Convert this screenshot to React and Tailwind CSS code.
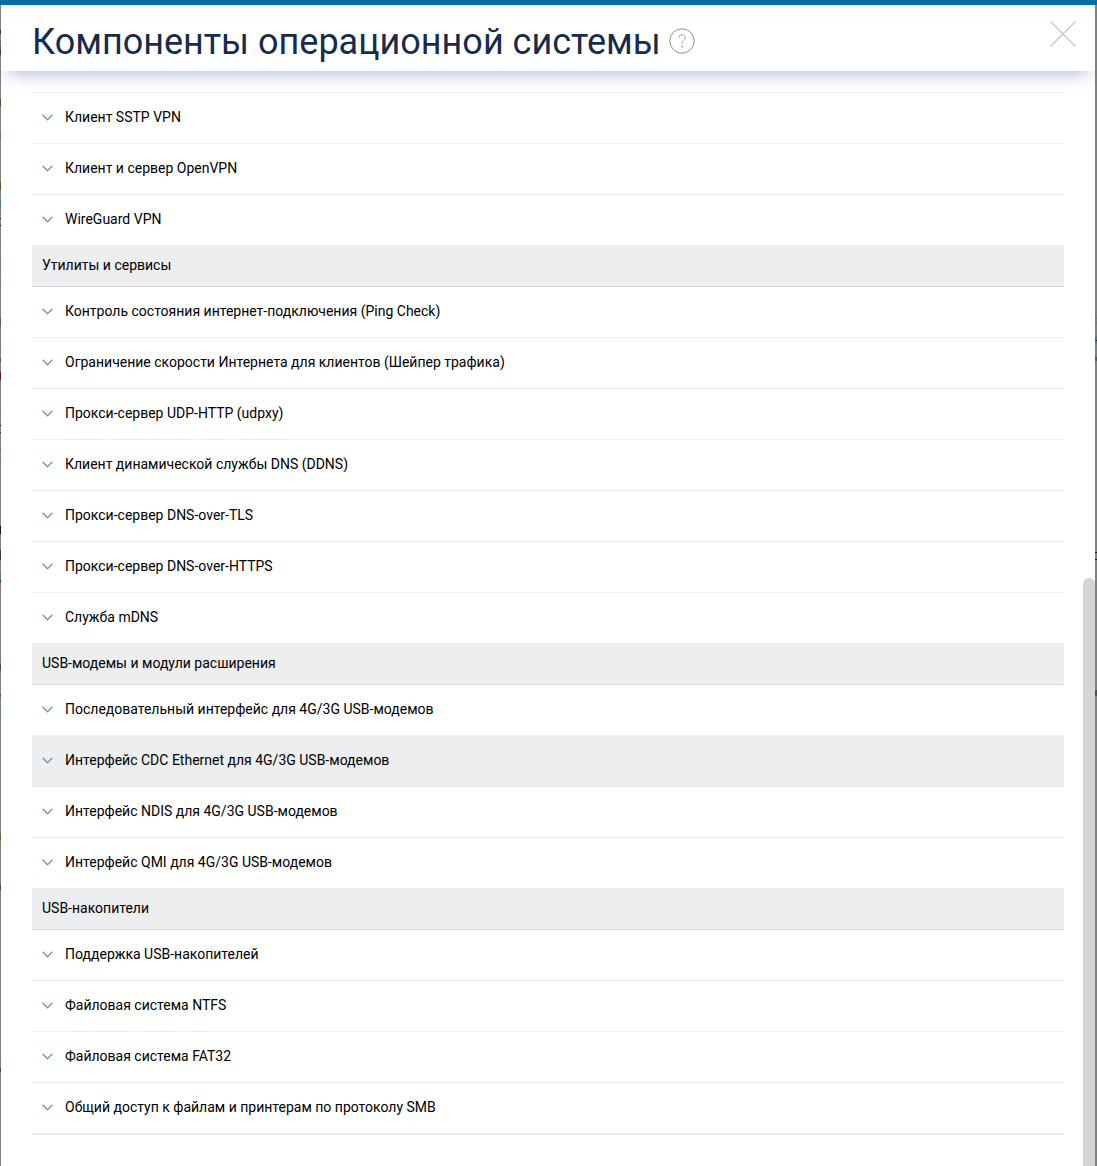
const groups = [
  { title: null, rows: ['Клиент SSTP VPN', 'Клиент и сервер OpenVPN', 'WireGuard VPN'] },
  {
    title: 'Утилиты и сервисы',
    rows: [
      'Контроль состояния интернет-подключения (Ping Check)',
      'Ограничение скорости Интернета для клиентов (Шейпер трафика)',
      'Прокси-сервер UDP-HTTP (udpxy)',
      'Клиент динамической службы DNS (DDNS)',
      'Прокси-сервер DNS-over-TLS',
      'Прокси-сервер DNS-over-HTTPS',
      'Служба mDNS',
    ],
  },
  {
    title: 'USB-модемы и модули расширения',
    highlighted: 1,
    rows: [
      'Последовательный интерфейс для 4G/3G USB-модемов',
      'Интерфейс CDC Ethernet для 4G/3G USB-модемов',
      'Интерфейс NDIS для 4G/3G USB-модемов',
      'Интерфейс QMI для 4G/3G USB-модемов',
    ],
  },
  {
    title: 'USB-накопители',
    rows: [
      'Поддержка USB-накопителей',
      'Файловая система NTFS',
      'Файловая система FAT32',
      'Общий доступ к файлам и принтерам по протоколу SMB',
    ],
  },
];

function Chevron() {
  return (
    <svg className="ml-[10px] mr-3 h-[7px] w-[11px] shrink-0" viewBox="0 0 11 7" fill="none">
      <path d="M0.6 0.8 5.5 5.7 10.4 0.8" stroke="#679ccb" strokeWidth="1.4" />
    </svg>
  );
}

function Row({ label, first, active }) {
  return (
    <div
      className={`flex items-center pb-[2px] ${first ? 'h-[50px]' : 'h-[51px] border-t'} ${
        active ? 'border-[#eceef0] bg-[#eceef0]' : 'border-[#ebecee]'
      }`}
    >
      <Chevron />
      <span className="whitespace-nowrap">{label}</span>
    </div>
  );
}

function Group({ group }) {
  return (
    <section>
      {group.title && (
        <h2 className="flex h-[42px] items-center border-b border-[#d5d8e1] bg-[#eceef0] pb-[2px] pl-[10px]">
          {group.title}
        </h2>
      )}
      {group.rows.map((label, i) => (
        <Row key={label} label={label} first={!!group.title && i === 0} active={group.highlighted === i} />
      ))}
    </section>
  );
}

// Fragments of the dimmed page visible beside the dialog: [top, height, color]
const leftMarks = [
  [30, 4, '#2b3157'], [40, 4, '#586c90'], [45, 5, '#695258'], [50, 5, '#303b68'],
  [99, 7, '#65441f'], [134, 6, '#5c7588'], [182, 8, '#69502b'], [200, 10, '#557b91'],
  [218, 1, '#222222'], [225, 1, '#222222'], [243, 1, '#3575a0'], [259, 1, '#3575a0'],
  [266, 1, '#3575a0'], [282, 1, '#3575a0'], [318, 8, '#6d5535'], [336, 1, '#5c87a0'],
  [343, 1, '#5c87a0'], [358, 4, '#684f35'], [372, 8, '#611c43'], [409, 1, '#3575a0'],
  [425, 1, '#222222'], [432, 1, '#222222'], [448, 1, '#3575a0'], [526, 8, '#161616'],
  [550, 10, '#502e4e'], [573, 7, '#4b7ca8'], [580, 3, '#622c31'], [664, 6, '#594532'],
  [694, 3, '#445b78'], [708, 7, '#628291'], [834, 6, '#805b27'], [885, 5, '#633f48'],
  [1068, 4, '#633f48'],
];
const rightMarks = [
  [318, 1, '#8a7048'], [321, 3, '#5d8098'], [336, 8, '#477d9b'], [340, 1, '#262626'],
  [357, 4, '#65504a'], [552, 1, '#181818'], [559, 1, '#181818'], [690, 6, '#514a58'],
];

function Backdrop({ marks, className }) {
  return (
    <div className={`relative shrink-0 bg-[#808082] ${className}`}>
      {marks.map(([top, height, backgroundColor]) => (
        <i key={top} className="absolute inset-x-0" style={{ top: top - 5, height, backgroundColor }} />
      ))}
    </div>
  );
}

export default function App() {
  return (
    <div className="flex h-[1166px] w-[1097px] flex-col overflow-hidden bg-white font-['Roboto',sans-serif] text-sm text-black">
      <div className="h-[5px] shrink-0 bg-[#036fa3]" />
      <div className="flex min-h-0 flex-1">
        <Backdrop marks={leftMarks} className="w-px" />
        <main className="flex min-w-0 flex-1 flex-col overflow-hidden">
          <header className="z-10 flex h-[66px] shrink-0 items-start bg-white pl-[31px] shadow-[0_9px_18px_-7px_#a9b5d8]">
            <h1 className="mt-[10px] w-[629px] whitespace-nowrap text-[36px] leading-[54px] text-[#172b4d]">
              Компоненты операционной системы
            </h1>
            <svg className="ml-2 mt-[23px] size-[26px]" viewBox="0 0 26 26" fill="none" stroke="#929292">
              <circle cx="13" cy="13" r="12.2" />
              <path d="M9.8 10.1V9.6C9.8 7.9 11.1 6.9 13 6.9s3.4 1 3.4 2.8c0 2.5-3.3 2.9-3.3 5.2v1" strokeWidth="0.9" />
              <path d="M13.1 17.8v1.8" strokeWidth="1.5" />
            </svg>
            <svg className="ml-auto mr-[19px] mt-[15.5px] size-[26px]" viewBox="0 0 26 26" fill="none" stroke="#bdc3cd">
              <path d="M.5.5 25.5 25.5M25.5.5.5 25.5" strokeWidth="1.2" />
            </svg>
          </header>
          <div className="flex min-h-0 flex-1">
            <div className="ml-[31px] mt-[21px] w-[1032px] shrink-0">
              {groups.map((group, i) => (
                <Group key={i} group={group} />
              ))}
              <div className="h-[2px] bg-[#ebecee]" />
            </div>
            <div className="ml-auto mt-[507px] w-3 rounded-t-full bg-[#d5d5d5]" />
          </div>
        </main>
        <Backdrop marks={rightMarks} className="w-[2px]" />
      </div>
    </div>
  );
}
